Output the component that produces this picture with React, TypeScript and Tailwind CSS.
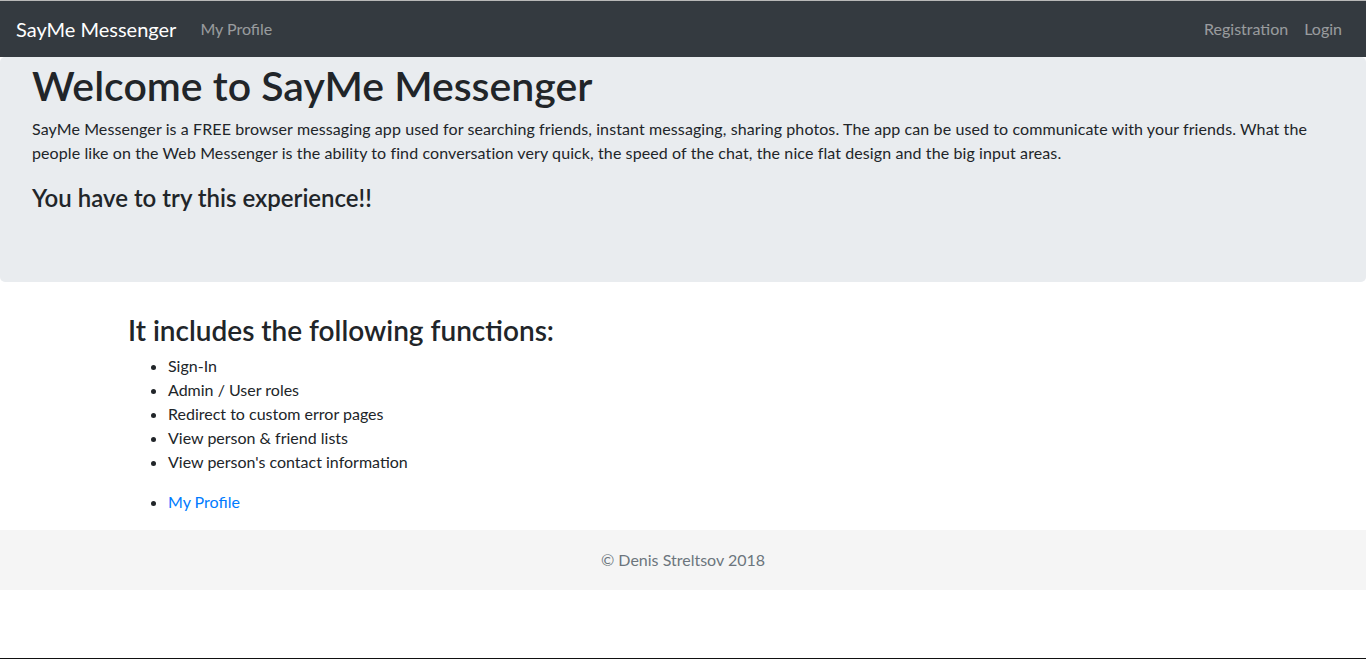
export default function App() {
  return (
    <div className="h-[659px] bg-white text-[#212529] font-['Lato','Noto_Sans',sans-serif] text-base leading-6 border-t border-[#b8b8b8] border-b border-b-[#111]">
      <nav className="flex items-center justify-between bg-[#343a40] px-4 py-2 h-14">
        <div className="flex items-center">
          <a className="text-xl leading-[30px] py-[5px] mr-4 text-white" href="#">
            SayMe Messenger
          </a>
          <a className="px-2 py-2 text-white/50" href="#">
            My Profile
          </a>
        </div>
        <div className="flex items-center">
          <a className="px-2 py-2 text-white/50" href="#">
            Registration
          </a>
          <a className="px-2 py-2 text-white/50" href="#">
            Login
          </a>
        </div>
      </nav>

      <section className="bg-[#e9ecef] px-8 pt-[6px] pb-[62px] mb-8 rounded-[5px]">
        <h1 className="text-[41px] leading-[46px] font-semibold mb-2">Welcome to SayMe Messenger</h1>
        <p className="mb-[18px] tracking-[0.1px]">
          SayMe Messenger is a FREE browser messaging app used for searching friends, instant messaging, sharing
          photos. The app can be used to communicate with your friends. What the people like on the Web Messenger is
          the ability to find conversation very quick, the speed of the chat, the nice flat design and the big input
          areas.
        </p>
        <h4 className="text-2xl leading-[29px] font-semibold mb-2">You have to try this experience!!</h4>
      </section>

      <main className="max-w-[1140px] mx-auto px-[15px]">
        <h3 className="text-[28px] leading-[32px] font-semibold mb-2">It includes the following functions:</h3>
        <ul className="list-disc pl-10 mb-4">
          <li>Sign-In</li>
          <li>Admin / User roles</li>
          <li>Redirect to custom error pages</li>
          <li>View person &amp; friend lists</li>
          <li>View person's contact information</li>
        </ul>
        <ul className="list-disc pl-10 mb-4">
          <li>
            <a className="text-[#007bff]" href="#">
              My Profile
            </a>
          </li>
        </ul>
      </main>

      <footer className="bg-[#f5f5f5] h-[60px] flex items-center justify-center text-[#6c757d]">
        © Denis Streltsov 2018
      </footer>
    </div>
  )
}
